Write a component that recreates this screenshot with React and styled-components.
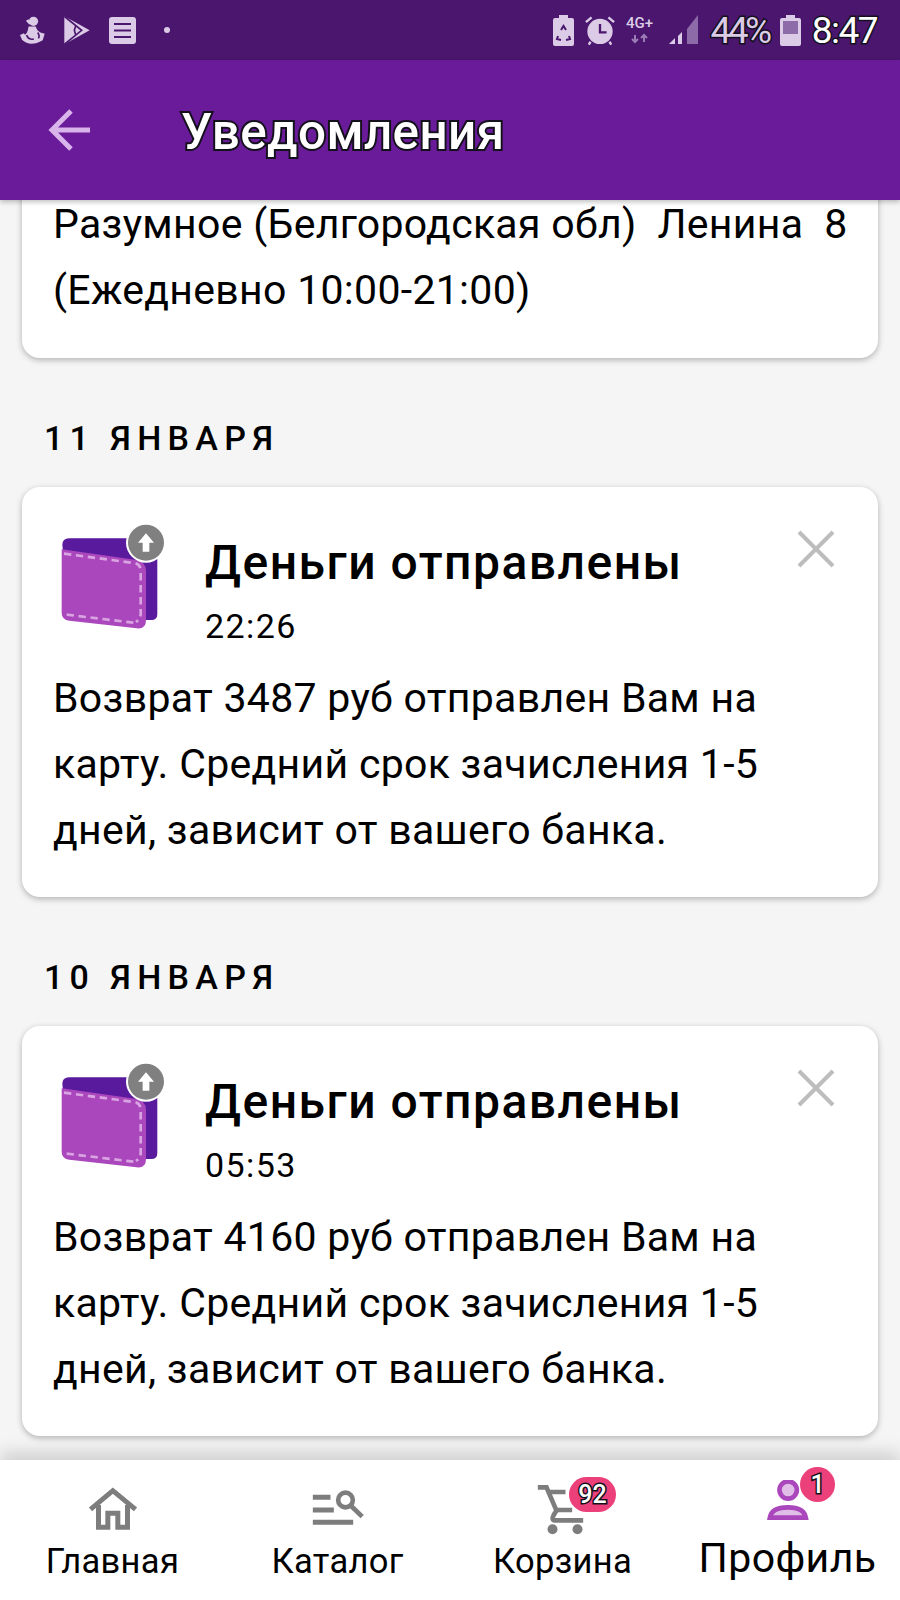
import React from 'react'
import styled, { createGlobalStyle, css } from 'styled-components'

const Global = createGlobalStyle`
  html, body { margin: 0; padding: 0; background: #f5f5f5; }
  * { box-sizing: border-box; }
`

const outlined = css`
  -webkit-text-stroke: 4px #14101c;
  paint-order: stroke fill;
  color: #fff;
`

const Screen = styled.div`
  width: 900px;
  height: 1600px;
  display: flex;
  flex-direction: column;
  overflow: hidden;
  background: #f5f5f5;
  font-family: Roboto, "Noto Sans", sans-serif;
  color: #000;
`

const StatusBar = styled.div`
  height: 60px;
  flex: none;
  background: #4a166e;
  display: flex;
  align-items: center;
  justify-content: space-between;
  padding: 0 23px 0 20px;
`

const StatusGroup = styled.div`
  display: flex;
  align-items: center;
  gap: ${p => p.$gap}px;
`

const Percent = styled.span`
  ${outlined}
  -webkit-text-stroke-width: 3px;
  color: #dccbe6;
  font-size: 37px;
  letter-spacing: -3.5px;
`

const Clock = styled.span`
  ${outlined}
  -webkit-text-stroke-width: 3px;
  font-size: 37px;
  letter-spacing: -1.5px;
`

const Dot = styled.span`
  width: 6px;
  height: 6px;
  margin-left: 9px;
  border-radius: 50%;
  background: #dccbe6;
`

const AppBar = styled.div`
  height: 140px;
  flex: none;
  background: #6a1b9a;
  display: flex;
  align-items: center;
  padding: 0 0 0 48px;
  position: relative;
  z-index: 2;
  box-shadow: 0 2px 5px rgba(0, 0, 0, .25);
`

const Title = styled.h1`
  ${outlined}
  margin: 4px 0 0 89px;
  font-size: 49.4px;
  font-weight: 500;
  letter-spacing: .4px;
`

const Feed = styled.div`
  flex: 1;
  min-height: 0;
  overflow: hidden;
  padding: 0 22px;
  position: relative;
`

const Card = styled.div`
  background: #fff;
  border-radius: 18px;
  box-shadow: 0 2px 6px rgba(0, 0, 0, .28);
  padding: ${p => p.$cut ? '15px 20px 35px 31px' : '33px 32px 34px 31px'};
  margin-top: ${p => p.$cut ? '-24px' : '0'};
  position: relative;
`

const DateLabel = styled.div`
  margin: 59px 0 28px 22px;
  font-size: 34px;
  font-weight: 500;
  letter-spacing: 6.3px;
  line-height: 42px;
`

const CardHead = styled.div`
  display: flex;
  align-items: flex-start;
`

const HeadText = styled.div`
  margin-left: 40px;
  padding-top: 13px;
`

const CardTitle = styled.div`
  font-size: 48px;
  font-weight: 500;
  letter-spacing: 1.5px;
  line-height: 60px;
`

const Time = styled.div`
  font-size: 34px;
  letter-spacing: 1.4px;
  line-height: 46px;
  margin-top: 10px;
`

const Close = styled.svg`
  position: absolute;
  top: 42px;
  right: 42px;
  width: 40px;
  height: 40px;
`

const Body = styled.div`
  font-size: 41px;
  line-height: 66px;
  letter-spacing: .3px;
  white-space: pre-wrap;
`

const CardBody = styled(Body)`
  margin-top: 16px;
`

const BottomNav = styled.div`
  height: 140px;
  flex: none;
  background: #fff;
  display: grid;
  grid-template-columns: repeat(4, 1fr);
  position: relative;
  z-index: 2;
  box-shadow: 0 -8px 16px rgba(0, 0, 0, .15);
`

const NavItem = styled.div`
  position: relative;
  display: flex;
  flex-direction: column;
  align-items: center;
`

const NavIcon = styled.svg`
  display: block;
  width: 100px;
  height: 64px;
  margin-top: 20px;
`

const NavLabel = styled.span`
  font-size: ${p => p.$active ? '41px' : '34.5px'};
  line-height: ${p => p.$active ? '44px' : '40px'};
  margin-top: ${p => p.$active ? '-8px' : '-3px'};
  letter-spacing: ${p => p.$active ? '.4px' : '.3px'};
`

const Badge = styled.span`
  ${outlined}
  -webkit-text-stroke-width: 3px;
  position: absolute;
  top: ${p => p.$top}px;
  left: ${p => p.$left}px;
  min-width: ${p => p.$w}px;
  height: ${p => p.$h}px;
  border-radius: 18px;
  background: #ec407a;
  display: flex;
  align-items: center;
  justify-content: center;
  font-size: 25px;
  font-weight: 500;
`

const ic = '#dccbe6'
const bar = '#4a166e'
const grey = '#7d7d7d'

const PersonIcon = () => (
  <svg width="25" height="28" viewBox="60 46 76 85">
    <circle cx="101" cy="62" r="14" fill={ic} />
    <path d="M88 72 78 60l8-4 8 12z" fill={ic} />
    <path d="M92 78h16c2 8 6 14 14 18l13 4-6 20c-12 8-24 10-34 10-10 0-20-4-29-12l-6-14 12-6 3 5c5-2 9-10 11-25z" fill={ic} />
    <path d="M80 104c4 10 12 14 22 12M114 96c4 6 6 12 2 18" fill="none" stroke={bar} strokeWidth="5" />
  </svg>
)

const PlayIcon = () => (
  <svg width="26" height="29" viewBox="195 45 78 87">
    <path d="M196 46 272 88 196 130z" fill={ic} />
    <path d="M196 46 248 88 196 130M230 75l-4 13 4 13" fill="none" stroke={bar} strokeWidth="5" />
  </svg>
)

const NoteIcon = () => (
  <svg width="27" height="27" viewBox="0 0 27 27">
    <rect width="27" height="27" rx="3" fill={ic} />
    <path d="M5 7h17M5 13.500h17M5 20h17" stroke={bar} strokeWidth="2.200" />
  </svg>
)

const RecycleBattery = () => (
  <svg width="21" height="31" viewBox="0 0 21 31">
    <path d="M6 0h9v3h4q2 0 2 2v24q0 2-2 2H2q-2 0-2-2V5q0-2 2-2h4z" fill={ic} />
    <path d="M8 15l2.500-4 2.500 4M5 21l-1 3 4 1M16 21l1 3-4 1" fill="none" stroke={bar} strokeWidth="2" />
  </svg>
)

const AlarmIcon = () => (
  <svg width="30" height="31" viewBox="0 0 32 32">
    <circle cx="16" cy="17" r="13.500" fill={ic} />
    <path d="M1 7l6-5M31 7l-6-5M6 28l-2 3M26 28l2 3" stroke={ic} strokeWidth="2.500" />
    <path d="M16 9v9h7" fill="none" stroke={bar} strokeWidth="2.500" />
  </svg>
)

const NetIcon = () => (
  <svg width="32" height="32" viewBox="0 0 32 32">
    <text x="0" y="14" fontFamily="Roboto, sans-serif" fontWeight="500" fontSize="15" fill={ic}>4G+</text>
    <path d="M9 21v7M6 25l3 3 3-3" fill="none" stroke="#9c7cb5" strokeWidth="2" />
    <path d="M18 28v-7M15 24l3-3 3 3" fill="none" stroke="#9c7cb5" strokeWidth="2" />
  </svg>
)

const SignalIcon = () => (
  <svg width="30" height="30" viewBox="0 0 30 30">
    <path d="M0 29l6-6v6z" fill={ic} />
    <path d="M9 21l4-4v12H9z" fill={ic} />
    <path d="M18 14l11-14v29H18z" fill="#8d6aa8" />
  </svg>
)

const BatteryIcon = () => (
  <svg width="21" height="31" viewBox="0 0 21 31">
    <path d="M6 0h9v3h4q2 0 2 2v24q0 2-2 2H2q-2 0-2-2V5q0-2 2-2h4z" fill={ic} />
    <rect x="3" y="6" width="15" height="13" fill="#8d6aa8" />
  </svg>
)

const BackArrow = () => (
  <svg width="44" height="44" viewBox="0 0 44 44">
    <path d="M42 22H5M23 3L4 22l19 19" fill="none" stroke="#d8b4ea" strokeWidth="5" />
  </svg>
)

// wallet and nav icons are drawn in coordinates of a 3x crop, that's why the viewBox starts off zero
const Wallet = () => (
  <svg width="110" height="120" viewBox="105 90 330 360" style={{ flex: 'none', marginLeft: 2 }}>
    <path d="M127 165q0-20 20-20H395q17 0 17 17V372q0 18-18 18H150z" fill="#5a1a9e" />
    <path d="M125 178 350 210q28 4 28 34V390q0 28-28 25L148 392q-23-3-23-24z" fill="#ab47bc" />
    <path d="M132 191 342 219q20 3 20 24V372q0 14-14 24M140 374 340 398" fill="none" stroke="#d9a4e2" strokeWidth="8" strokeDasharray="22 14" />
    <circle cx="378" cy="158" r="60" fill="#fff" />
    <circle cx="378" cy="158" r="54" fill="#808080" />
    <path d="M378 130 402 158H388V185H368V158H354z" fill="#fff" />
  </svg>
)

const CloseIcon = () => (
  <Close viewBox="0 0 40 40">
    <path d="M3 3l34 34M37 3L3 37" stroke="#bdbdbd" strokeWidth="4" />
  </Close>
)

const Notification = ({ time, sum }) => (
  <Card>
    <CardHead>
      <Wallet />
      <HeadText>
        <CardTitle>Деньги отправлены</CardTitle>
        <Time>{time}</Time>
      </HeadText>
    </CardHead>
    <CloseIcon />
    <CardBody>{`Возврат ${sum} руб отправлен Вам на карту. Средний срок зачисления 1-5 дней, зависит от вашего банка.`}</CardBody>
  </Card>
)

export default function App() {
  return (
    <Screen>
      <Global />
      <StatusBar>
        <StatusGroup $gap={19}>
          <PersonIcon />
          <PlayIcon />
          <NoteIcon />
          <Dot />
        </StatusGroup>
        <StatusGroup $gap={11}>
          <RecycleBattery />
          <AlarmIcon />
          <NetIcon />
          <SignalIcon />
          <Percent>44%</Percent>
          <BatteryIcon />
          <Clock>8:47</Clock>
        </StatusGroup>
      </StatusBar>
      <AppBar>
        <BackArrow />
        <Title>Уведомления</Title>
      </AppBar>
      <Feed>
        <Card $cut>
          <Body>{'Разумное (Белгородская обл)  Ленина  8\n(Ежедневно 10:00-21:00)'}</Body>
        </Card>
        <DateLabel>11 ЯНВАРЯ</DateLabel>
        <Notification time="22:26" sum="3487" />
        <DateLabel>10 ЯНВАРЯ</DateLabel>
        <Notification time="05:53" sum="4160" />
      </Feed>
      <BottomNav>
        <NavItem>
          <NavIcon viewBox="187.500 120 300 192">
            <path d="M270 208 337 152 405 208" fill="none" stroke={grey} strokeWidth="15" />
            <path d="M294 195V262H322V220H352V262H381V195" fill="none" stroke={grey} strokeWidth="15" />
          </NavIcon>
          <NavLabel>Главная</NavLabel>
        </NavItem>
        <NavItem>
          <NavIcon viewBox="862.500 120 300 192">
            <path d="M937 172H990M937 210H1000M937 247H1058" stroke={grey} strokeWidth="15" />
            <circle cx="1035" cy="180" r="22" fill="none" stroke={grey} strokeWidth="14" />
            <path d="M1052 198 1085 230" stroke={grey} strokeWidth="14" />
          </NavIcon>
          <NavLabel>Каталог</NavLabel>
        </NavItem>
        <NavItem>
          <NavIcon viewBox="187.500 120 300 192">
            <path d="M262 142H288L318 212Q298 240 312 241H398" fill="none" stroke={grey} strokeWidth="14" />
            <path d="M295 156H345M315 210H365" stroke={grey} strokeWidth="14" />
            <circle cx="306" cy="268" r="15" fill={grey} />
            <circle cx="381" cy="268" r="15" fill={grey} />
          </NavIcon>
          <NavLabel>Корзина</NavLabel>
          <Badge $top={17} $left={119} $w={47} $h={35}>92</Badge>
        </NavItem>
        <NavItem>
          <NavIcon viewBox="862.500 120 300 192">
            <circle cx="1013" cy="150" r="26" fill="#e1bee7" stroke="#ab47bc" strokeWidth="14" />
            <path d="M958 233H1066C1062 210 1040 202 1012 202C985 202 962 210 958 233z" fill="#e1bee7" stroke="#ab47bc" strokeWidth="14" />
          </NavIcon>
          <NavLabel $active>Профиль</NavLabel>
          <Badge $top={7} $left={125} $w={35} $h={35}>1</Badge>
        </NavItem>
      </BottomNav>
    </Screen>
  )
}
